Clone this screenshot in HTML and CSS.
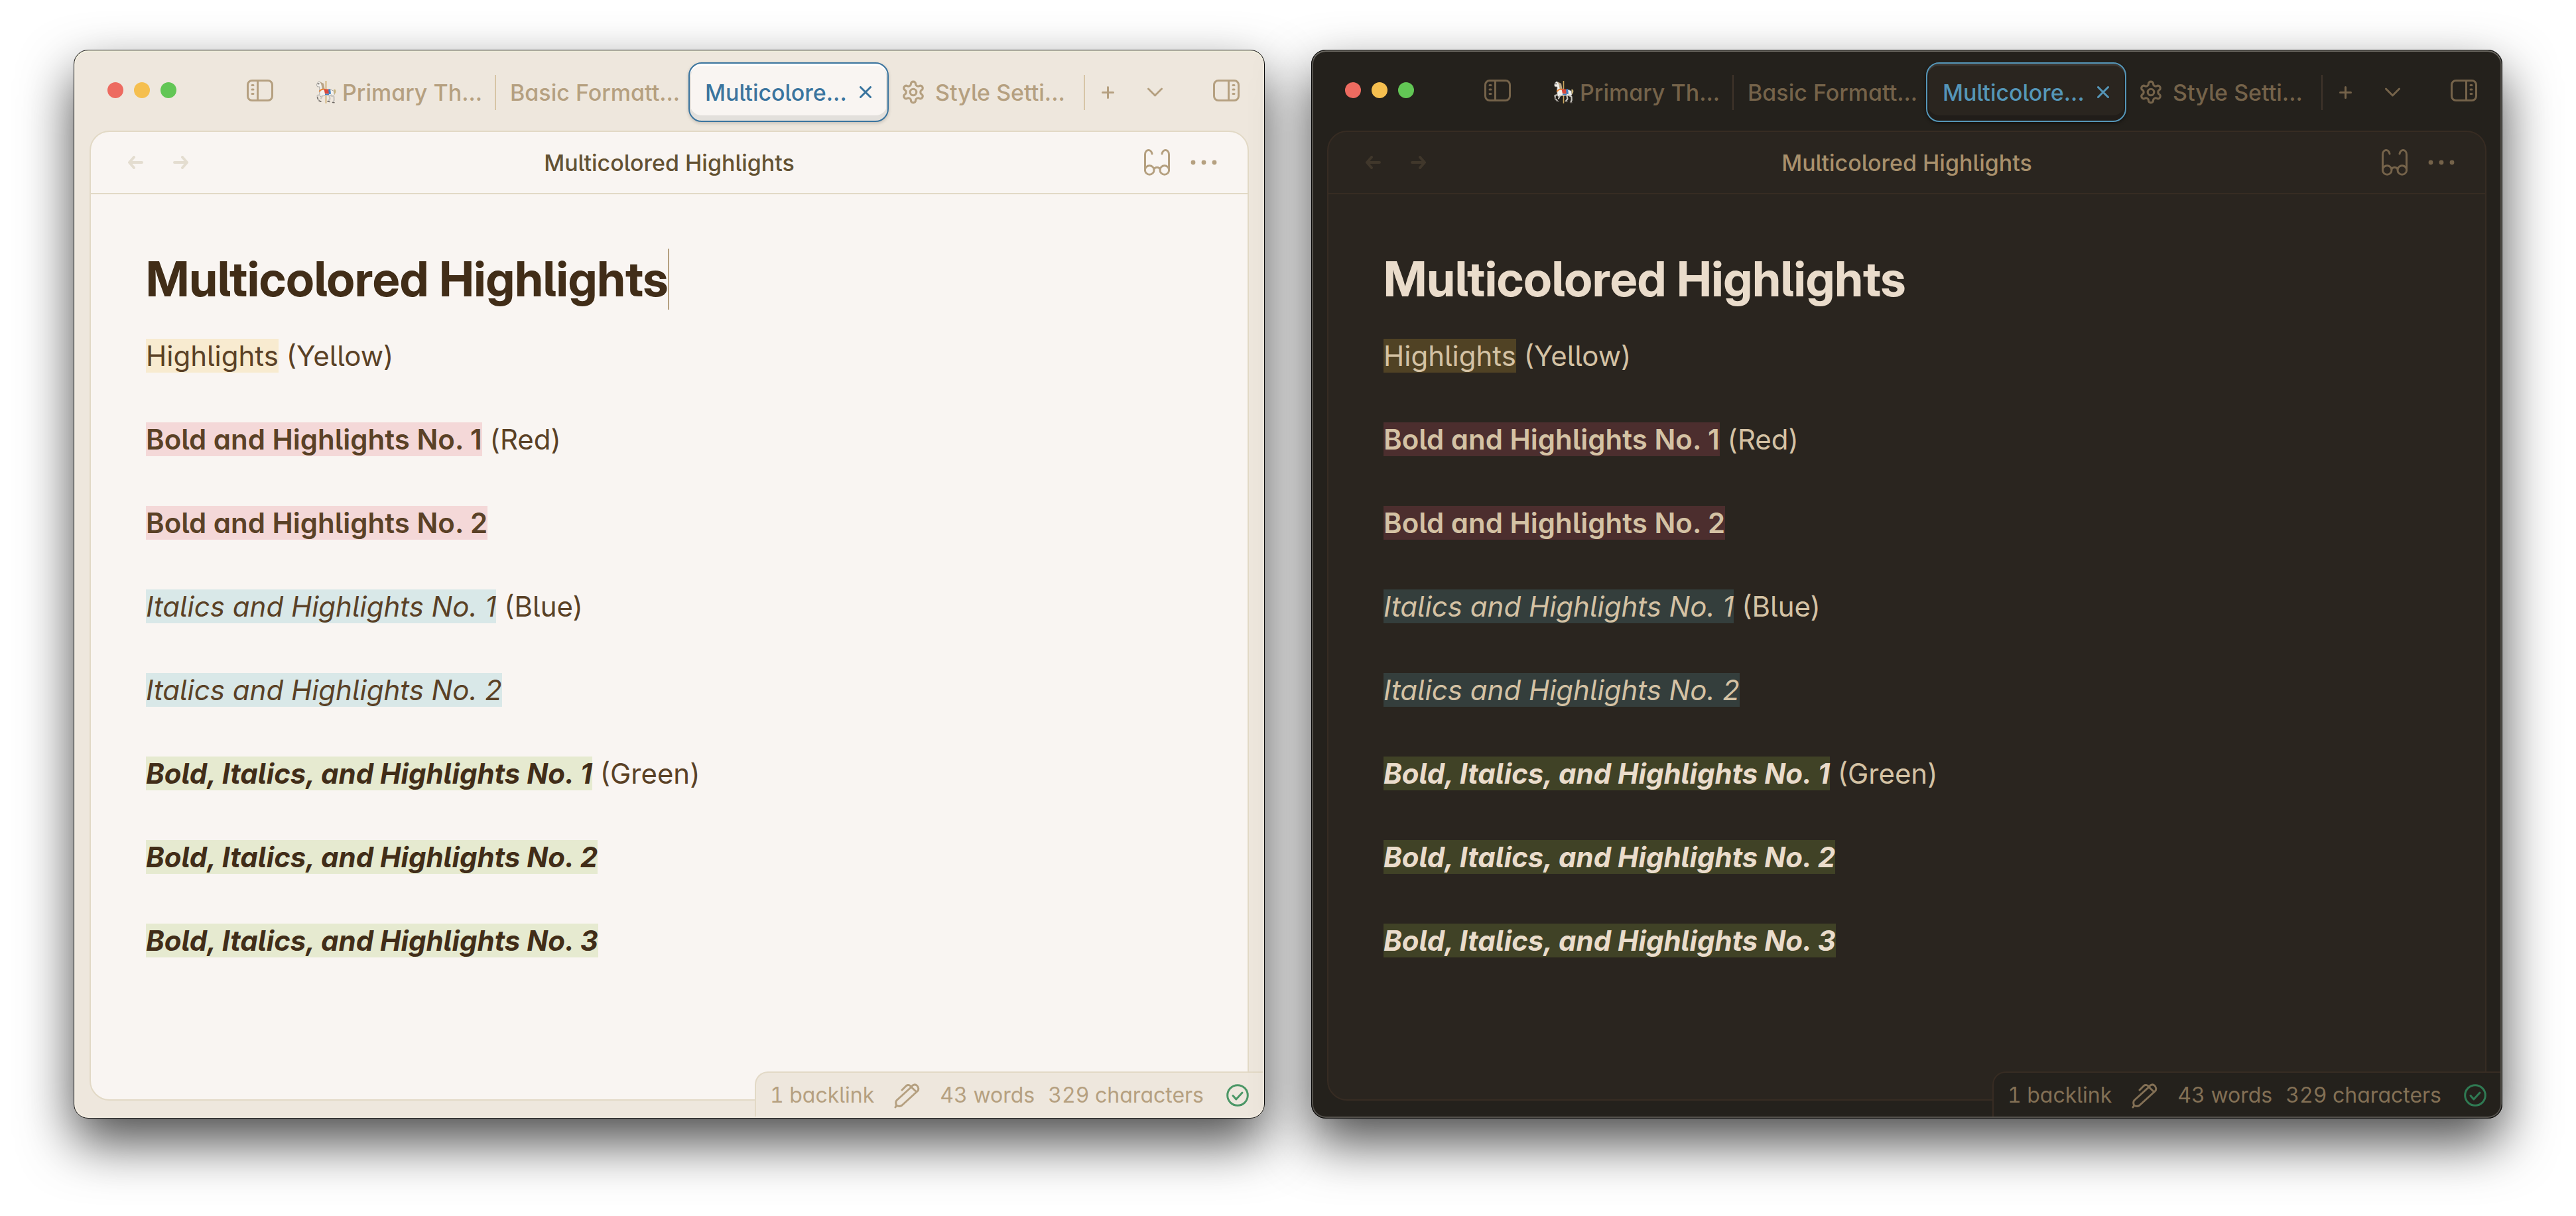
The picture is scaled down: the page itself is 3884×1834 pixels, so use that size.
FILE: index.html
```
<!DOCTYPE html>
<html lang="en">
<head>
<meta charset="utf-8">
<meta name="viewport" content="width=device-width, initial-scale=1">
<title>Multicolored Highlights</title>
<link rel="stylesheet" href="styles.css">
</head>
<body>

<svg class="sprite" aria-hidden="true">
  <symbol id="i-sidebar-left" viewBox="0 0 40 33">
    <rect x="1.5" y="1.5" width="37" height="30" rx="6.5"/>
    <path d="M16.5 2v29"/>
    <path d="M8 8.5h2M8 15h2M8 21.5h2"/>
  </symbol>
  <symbol id="i-sidebar-right" viewBox="0 0 40 33">
    <rect x="1.5" y="1.5" width="37" height="30" rx="6.5"/>
    <path d="M23.5 2v29"/>
    <path d="M30 8.5h2M30 15h2M30 21.5h2"/>
  </symbol>
  <symbol id="i-horse" viewBox="0 0 30 34">
    <path d="M14.5 0v34" stroke="#c9a45c" stroke-width="1.6" fill="none"/>
    <path d="M2 2.5 4 .8l2 1.4 3 2.8 1.5 7 3 1.5h9l4 2 .6 5-2 3-6-1.5-7 .3-6 1.4L5 21 4.600 13.500 5 9 1.500 8.800.6 6.500z" fill="#f3f1ec" stroke="#8d8a85" stroke-width=".7"/>
    <path d="M5.500 1.200 11 4l1.500 8-3.500 2L7.500 6z" fill="#b9a487"/>
    <path d="M26 13.500c2-2 4 .5 3.200 3.500-.3 2-1.700 3-2.700 3 .8-2.500.6-4.500-.5-6.500z" fill="#c7b27a"/>
    <path d="M5 21 1.500 22 2 27l3 3M9 22.500l-2 4M22.500 21.500l4 2.500.2 5-1.200 3M19.500 22.500l1 4.500-2.500 3.500" fill="none" stroke="#c9c6c0" stroke-width="2.200"/>
    <path d="m4 30 3 1.200M17 31l3 .5M24.500 32.500l2.500.2M1.500 25l1 2.500" fill="none" stroke="#6d6762" stroke-width="1.500"/>
    <path d="M4.800 15.500c2.500-3 5-3.500 8-2.500" fill="none" stroke="#e88a3c" stroke-width="2"/>
    <path d="M11.500 12.500h8l1.500 7h-8z" fill="#d9483b"/>
    <path d="m18 13 3-1 1 7.500-3 .8zM13 19.500h6v1.600h-6z" fill="#3f83c4"/>
    <path d="M2.500 4.500h1.500" stroke="#4a4541" stroke-width="1.300"/>
  </symbol>
  <symbol id="i-gear" viewBox="0 0 24 24">
    <path d="M12.220 2h-.44a2 2 0 0 0-2 2v.18a2 2 0 0 1-1 1.730l-.43.25a2 2 0 0 1-2 0l-.15-.08a2 2 0 0 0-2.730.73l-.22.38a2 2 0 0 0 .73 2.730l.15.1a2 2 0 0 1 1 1.720v.51a2 2 0 0 1-1 1.740l-.15.09a2 2 0 0 0-.73 2.730l.22.38a2 2 0 0 0 2.730.73l.15-.08a2 2 0 0 1 2 0l.43.25a2 2 0 0 1 1 1.730V20a2 2 0 0 0 2 2h.44a2 2 0 0 0 2-2v-.18a2 2 0 0 1 1-1.730l.43-.25a2 2 0 0 1 2 0l.15.08a2 2 0 0 0 2.730-.73l.22-.39a2 2 0 0 0-.73-2.730l-.15-.08a2 2 0 0 1-1-1.740v-.5a2 2 0 0 1 1-1.740l.15-.09a2 2 0 0 0 .73-2.730l-.22-.38a2 2 0 0 0-2.730-.73l-.15.08a2 2 0 0 1-2 0l-.43-.25a2 2 0 0 1-1-1.730V4a2 2 0 0 0-2-2z"/>
    <circle cx="12" cy="12" r="3"/>
  </symbol>
  <symbol id="i-close" viewBox="0 0 18 18"><path d="m1.500 1.500 15 15m0-15-15 15"/></symbol>
  <symbol id="i-plus" viewBox="0 0 19 19"><path d="M9.500 1.500v16m-8-8h16"/></symbol>
  <symbol id="i-chevron" viewBox="0 0 23 13"><path d="m1.500 1.500 10 10 10-10"/></symbol>
  <symbol id="i-back" viewBox="0 0 23 20"><path d="M21 10H2.500M9 2l-7 8 7 8"/></symbol>
  <symbol id="i-forward" viewBox="0 0 23 20"><path d="M2 10h18.500M14 2l7 8-7 8"/></symbol>
  <symbol id="i-glasses" viewBox="0 0 39 40">
    <circle cx="8.200" cy="31.500" r="6.800"/>
    <circle cx="30.800" cy="31.500" r="6.800"/>
    <path d="M15 30c1-3.500 8-3.500 9 0M1.500 31V8c0-8 9-9 10.500-1M37.500 31V8c0-8-9-9-10.500-1"/>
  </symbol>
  <symbol id="i-dots" viewBox="0 0 40 8">
    <g fill="currentColor" stroke="none"><circle cx="4" cy="4" r="3.400"/><circle cx="20" cy="4" r="3.400"/><circle cx="36" cy="4" r="3.400"/></g>
  </symbol>
  <symbol id="i-pen" viewBox="0 0 39 40">
    <path d="M26 7.500 4 27.500c-2 2-1.500 4.500-.5 7.500 3 1.800 6 2 8.500 0L35.500 13.500c4.500-5-4-15-9.500-6zl8 7.500M12 12l6.500-6.500c2.500-2 6-1 8 2.500M3.500 35.500 2 38"/>
  </symbol>
  <symbol id="i-check" viewBox="0 0 34 34"><circle cx="17" cy="17" r="15.300"/><path d="m10 17.500 4.800 5.500 9.200-10"/></symbol>
</svg>

<section class="window theme-light" aria-label="Light theme">
  <header class="titlebar">
    <div class="lights">
      <button class="light close" aria-label="Close window"></button>
      <button class="light minimize" aria-label="Minimize window"></button>
      <button class="light zoom" aria-label="Zoom window"></button>
    </div>
    <button class="sidebar-left" aria-label="Toggle left sidebar"><svg class="w40"><use href="#i-sidebar-left"/></svg></button>
    <nav class="tab-strip">
      <div class="tab divided"><button class="tab-label"><svg class="horse"><use href="#i-horse"/></svg>Primary Th...</button></div>
      <div class="tab"><button class="tab-label">Basic Formatt...</button></div>
      <div class="tab active"><button class="tab-label">Multicolore...</button><button class="tab-close" aria-label="Close tab"><svg class="w18"><use href="#i-close"/></svg></button></div>
      <div class="tab divided"><button class="tab-label"><svg class="gear"><use href="#i-gear"/></svg>Style Setti...</button></div>
      <button class="new-tab" aria-label="New tab"><svg class="w19"><use href="#i-plus"/></svg></button>
      <button class="tab-list" aria-label="Tab list"><svg class="w23"><use href="#i-chevron"/></svg></button>
    </nav>
    <button class="sidebar-right" aria-label="Toggle right sidebar"><svg class="w40"><use href="#i-sidebar-right"/></svg></button>
  </header>

  <main class="pane">
    <div class="view-header">
      <div class="history">
        <button aria-label="Back"><svg class="w23"><use href="#i-back"/></svg></button>
        <button aria-label="Forward"><svg class="w23"><use href="#i-forward"/></svg></button>
      </div>
      <div class="view-title">Multicolored Highlights</div>
      <div class="actions">
        <button aria-label="Reading view"><svg class="w39"><use href="#i-glasses"/></svg></button>
        <button aria-label="More options"><svg class="w40 dots"><use href="#i-dots"/></svg></button>
      </div>
    </div>
    <article class="note">
      <h1>Multicolored Highlights<span class="caret"></span></h1>
      <p><mark class="yellow">Highlights</mark> (Yellow)</p>
      <p><mark class="red"><strong>Bold and Highlights No. 1</strong></mark> (Red)</p>
      <p><mark class="red"><strong>Bold and Highlights No. 2</strong></mark></p>
      <p><mark class="blue"><em>Italics and Highlights No. 1</em></mark> (Blue)</p>
      <p><mark class="blue"><em>Italics and Highlights No. 2</em></mark></p>
      <p><mark class="green"><strong><em>Bold, Italics, and Highlights No. 1</em></strong></mark> (Green)</p>
      <p><mark class="green"><strong><em>Bold, Italics, and Highlights No. 2</em></strong></mark></p>
      <p><mark class="green"><strong><em>Bold, Italics, and Highlights No. 3</em></strong></mark></p>
    </article>
  </main>

  <footer class="status">
    <span>1 backlink</span>
    <svg class="w39"><use href="#i-pen"/></svg>
    <span class="words">43 words</span>
    <span>329 characters</span>
    <svg class="sync"><use href="#i-check"/></svg>
  </footer>
</section>

<section class="window theme-dark" aria-label="Dark theme">
  <header class="titlebar">
    <div class="lights">
      <button class="light close" aria-label="Close window"></button>
      <button class="light minimize" aria-label="Minimize window"></button>
      <button class="light zoom" aria-label="Zoom window"></button>
    </div>
    <button class="sidebar-left" aria-label="Toggle left sidebar"><svg class="w40"><use href="#i-sidebar-left"/></svg></button>
    <nav class="tab-strip">
      <div class="tab divided"><button class="tab-label"><svg class="horse"><use href="#i-horse"/></svg>Primary Th...</button></div>
      <div class="tab"><button class="tab-label">Basic Formatt...</button></div>
      <div class="tab active"><button class="tab-label">Multicolore...</button><button class="tab-close" aria-label="Close tab"><svg class="w18"><use href="#i-close"/></svg></button></div>
      <div class="tab divided"><button class="tab-label"><svg class="gear"><use href="#i-gear"/></svg>Style Setti...</button></div>
      <button class="new-tab" aria-label="New tab"><svg class="w19"><use href="#i-plus"/></svg></button>
      <button class="tab-list" aria-label="Tab list"><svg class="w23"><use href="#i-chevron"/></svg></button>
    </nav>
    <button class="sidebar-right" aria-label="Toggle right sidebar"><svg class="w40"><use href="#i-sidebar-right"/></svg></button>
  </header>

  <main class="pane">
    <div class="view-header">
      <div class="history">
        <button aria-label="Back"><svg class="w23"><use href="#i-back"/></svg></button>
        <button aria-label="Forward"><svg class="w23"><use href="#i-forward"/></svg></button>
      </div>
      <div class="view-title">Multicolored Highlights</div>
      <div class="actions">
        <button aria-label="Reading view"><svg class="w39"><use href="#i-glasses"/></svg></button>
        <button aria-label="More options"><svg class="w40 dots"><use href="#i-dots"/></svg></button>
      </div>
    </div>
    <article class="note">
      <h1>Multicolored Highlights</h1>
      <p><mark class="yellow">Highlights</mark> (Yellow)</p>
      <p><mark class="red"><strong>Bold and Highlights No. 1</strong></mark> (Red)</p>
      <p><mark class="red"><strong>Bold and Highlights No. 2</strong></mark></p>
      <p><mark class="blue"><em>Italics and Highlights No. 1</em></mark> (Blue)</p>
      <p><mark class="blue"><em>Italics and Highlights No. 2</em></mark></p>
      <p><mark class="green"><strong><em>Bold, Italics, and Highlights No. 1</em></strong></mark> (Green)</p>
      <p><mark class="green"><strong><em>Bold, Italics, and Highlights No. 2</em></strong></mark></p>
      <p><mark class="green"><strong><em>Bold, Italics, and Highlights No. 3</em></strong></mark></p>
    </article>
  </main>

  <footer class="status">
    <span>1 backlink</span>
    <svg class="w39"><use href="#i-pen"/></svg>
    <span class="words">43 words</span>
    <span>329 characters</span>
    <svg class="sync"><use href="#i-check"/></svg>
  </footer>
</section>

</body>
</html>
```
FILE: styles.css
```
* { box-sizing: border-box; }

body {
  display: flex;
  gap: 70px;
  min-height: 100vh;
  margin: 0;
  padding: 75px 111px 147px;
  background: #fff;
  font-family: Inter, sans-serif;
  font-feature-settings: "cv11", "cv05";
  font-size: 34px;
}

button {
  display: flex;
  align-items: center;
  padding: 0;
  border: 0;
  background: none;
  color: inherit;
  font: inherit;
  font-feature-settings: inherit;
  white-space: nowrap;
}

svg {
  flex: none;
  fill: none;
  stroke: currentColor;
  stroke-width: 3;
  stroke-linecap: round;
  stroke-linejoin: round;
}

.sprite { position: absolute; width: 0; height: 0; }
.w18 { width: 18px; height: 18px; }
.w19 { width: 19px; height: 19px; }
.w23 { width: 23px; height: 20px; }
.w39 { width: 39px; height: 40px; }
.w40 { width: 40px; height: 33px; }
.dots { height: 8px; }

/* Themes */

.theme-light {
  --frame: #eee7dd;
  --surface: #f9f5f2;
  --line: #e2d9c6;
  --divider: #d7c5a6;
  --muted: #b5a080;
  --status: #b5a080;
  --faint: #e4ddd0;
  --accent: #3a749e;
  --title: #635132;
  --text: #5a4126;
  --strong: #412d18;
  --yellow: #f8ebd0;
  --red: #f4d8d8;
  --blue: #d9e8e8;
  --green: #e6ead0;
  --sync: #4b9766;
  --tab-top: #ffffff;
  --tab-bottom: #e3e0dc;
  --tab-shadow: rgba(0, 0, 0, 0.18);
  --edge: #0c0c0c;
  --edge-inner: #f1ebe0;
  --edge-top: #f3f1de;
}

.theme-dark {
  --frame: #24211c;
  --surface: #2a251f;
  --line: #372c23;
  --divider: #40342a;
  --muted: #75634a;
  --status: #837055;
  --faint: #40372b;
  --accent: #5596b8;
  --title: #a8906c;
  --text: #d4c2a4;
  --strong: #eadccb;
  --yellow: #504224;
  --red: #4c2e2e;
  --blue: #343e3c;
  --green: #404226;
  --sync: #2f7a53;
  --tab-top: #3d3833;
  --tab-bottom: #211d19;
  --tab-shadow: rgba(0, 0, 0, 0.5);
  --edge: #060606;
  --edge-inner: #53504b;
  --edge-top: #6c6962;
}

/* Window frame */

.window {
  position: relative;
  display: flex;
  flex: 1;
  flex-direction: column;
  min-width: 0;
  border-radius: 22px;
  background: var(--frame);
  color: var(--muted);
  box-shadow: 0 36px 80px rgba(0, 0, 0, 0.7);
}

.window::after {
  content: "";
  position: absolute;
  inset: 0;
  border: 1px solid var(--edge);
  border-radius: 22px;
  box-shadow: inset 0 2px 0 var(--edge-top), inset 0 0 0 2px var(--edge-inner);
  pointer-events: none;
}

.titlebar {
  display: flex;
  align-items: center;
  height: 122px;
  padding: 0 38px 0 51px;
}

.lights { display: flex; gap: 16px; }
.light { width: 24px; height: 24px; border-radius: 50%; }
.light.close { background: #ed6b60; }
.light.minimize { background: #f5bf4f; }
.light.zoom { background: #62c655; }

.sidebar-left { margin-left: 106px; }

/* Tabs */

.tab-strip {
  display: flex;
  flex: 1;
  align-items: center;
  min-width: 0;
  padding: 6px 76px 0 40px;
  font-weight: 500;
}

.tab {
  display: flex;
  flex: 1 1 200px;
  align-items: center;
  min-width: 0;
  height: 90px;
  padding-left: 21px;
}

.tab.divided::after {
  content: "";
  width: 2px;
  height: 53px;
  margin-left: auto;
  background: var(--divider);
}

.horse {
  width: 30px;
  height: 34px;
  margin: 0 9px 0 4px;
  stroke: none;
}

.gear {
  width: 38px;
  height: 38px;
  margin: 0 14px 0 -3px;
  stroke-width: 2;
}

.tab.active {
  flex-basis: 206px;
  margin-left: -6px;
  padding: 0 24px 0 23px;
  justify-content: space-between;
  border: 2px solid var(--accent);
  border-radius: 20px;
  background: var(--surface);
  color: var(--accent);
  box-shadow:
    inset 0 3px 0 var(--tab-top),
    inset 0 -8px 0 var(--tab-bottom),
    inset 0 0 0 2px var(--tab-bottom),
    0 2px 5px var(--tab-shadow);
}

.new-tab { margin-left: 25px; }
.tab-list { margin-left: 50px; }

/* Pane */

.pane {
  flex: 1;
  margin: 0 24px 27px;
  border: 2px solid var(--line);
  border-radius: 30px;
  background: var(--surface);
}

.view-header {
  display: grid;
  grid-template-columns: 1fr auto 1fr;
  align-items: center;
  height: 94px;
  border-bottom: 2px solid var(--line);
}

.history {
  display: flex;
  gap: 45px;
  padding-left: 56px;
  color: var(--faint);
}

.history svg { stroke-width: 4; }

.view-title { color: var(--title); font-weight: 500; }

.actions {
  display: flex;
  justify-content: flex-end;
  gap: 31px;
  padding-right: 46px;
}

/* Note */

.note {
  padding: 82px 83px;
  color: var(--text);
  font-size: 42px;
  line-height: 63px;
}

.note h1 {
  display: flex;
  margin: 0 0 38px;
  color: var(--strong);
  font-family: "Inter Display", Inter, sans-serif;
  font-size: 73px;
  font-weight: 700;
  line-height: 92px;
}

.caret { width: 2px; background: #b5a080; }

.note p { margin: 0 0 63px; }
.note p:last-child { margin-bottom: 0; }
.note strong { font-weight: 600; }
.note strong em { font-weight: 700; }

mark { color: inherit; }
.yellow { background: var(--yellow); }
.red { background: var(--red); }
.blue { background: var(--blue); }
.green { background: var(--green); color: var(--strong); }

/* Status bar, lying over the pane's corner */

.status {
  position: absolute;
  right: 0;
  bottom: 0;
  display: flex;
  align-items: center;
  gap: 30px;
  height: 71px;
  padding: 0 24px 2px 21px;
  border: solid var(--line);
  border-width: 2px 0 0 2px;
  border-radius: 20px 0 22px;
  background: var(--frame);
  color: var(--status);
  font-size: 32px;
  font-variant-numeric: tabular-nums;
  white-space: nowrap;
}

.words { margin-right: -10px; }

.sync {
  width: 34px;
  height: 34px;
  margin-left: 4px;
  color: var(--sync);
}
```
